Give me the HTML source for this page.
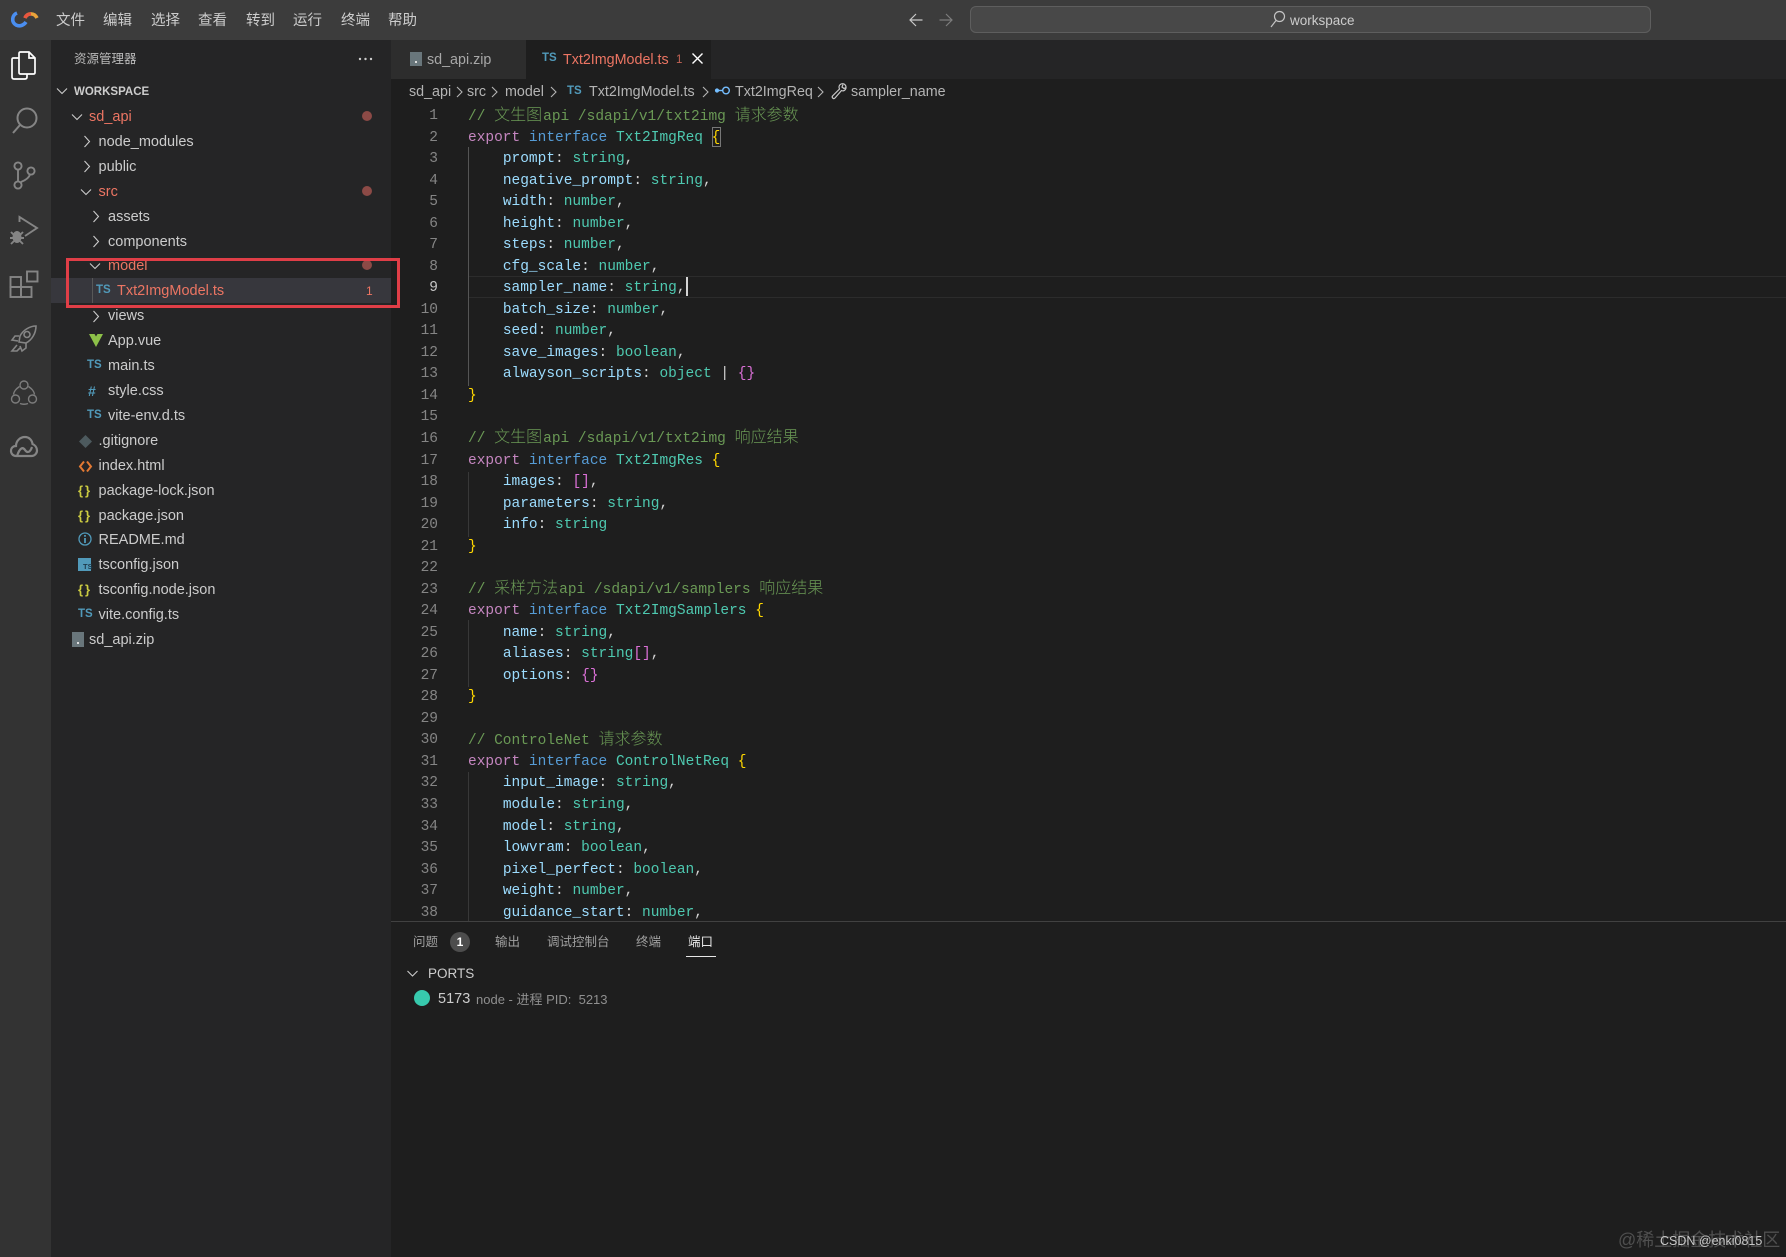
<!DOCTYPE html>
<html lang="zh">
<head>
<meta charset="utf-8">
<title>Txt2ImgModel.ts - workspace</title>
<style>
html,body{margin:0;padding:0;background:#1e1e1e}
#app{position:relative;width:1786px;height:1257px;overflow:hidden;background:#1e1e1e;font-family:"Liberation Sans","Noto Sans CJK SC",sans-serif;color:#ccc}
.a{position:absolute}
#title{left:0;top:0;width:1786px;height:40px;background:#3c3c3c}
.m{position:absolute;top:9px;font-size:14.5px;line-height:24px;color:#ccc;white-space:nowrap}
#act{left:0;top:40px;width:51px;height:1217px;background:#333}
#side{left:51px;top:40px;width:340px;height:1217px;background:#252526}
#tabs{left:391px;top:40px;width:1395px;height:39px;background:#252526}
.r{position:absolute;height:25px;line-height:25px;font-size:14.5px;white-space:nowrap;color:#ccc}
.e{color:#ec7563}
.ic{position:absolute;font-weight:bold;text-align:center;white-space:nowrap}
.ts{color:#519aba;font-size:11.5px;line-height:25px;height:25px}
.js{color:#cbcb41;font-size:13px;line-height:25px;height:25px;letter-spacing:2px}
.dot{position:absolute;left:362px;width:10px;height:10px;border-radius:50%;background:#8c4a46}
#code{left:468px;top:106px;width:1300px;height:815px;overflow:hidden;font-family:"Liberation Mono",monospace;font-size:14.5px;color:#d4d4d4}
.l{height:21.54px;line-height:21.54px;white-space:pre}
.c{position:relative;top:-1.5px}
.k{color:#c586c0}.i{color:#569cd6}.t{color:#4ec9b0}.p{color:#9cdcfe}.c{color:#6a9955}.b{color:#ffd700}.o{color:#da70d6}
.z{font-family:"Noto Sans CJK SC",sans-serif;font-size:16px;line-height:1;font-weight:300}
.y{margin-right:1px}
#nums{left:400px;top:106px;width:38px;height:815px;overflow:hidden;text-align:right;font-family:"Liberation Mono",monospace;font-size:14.5px;color:#858585}
#panel{left:391px;top:921px;width:1395px;height:336px;background:#1e1e1e;border-top:1px solid #414141;box-sizing:border-box}
.pt{position:absolute;top:932px;font-size:12.5px;line-height:20px;color:#a0a0a0;white-space:nowrap}
svg{position:absolute;overflow:visible}
</style>
</head>
<body>
<div id="app">

<div id="title" class="a"></div>
<svg style="left:10px;top:10px" width="28" height="20" viewBox="0 0 28 20" fill="none">
<path d="M7 3 C2 5 1 12 6 15 C10 17 14 15 16 12" stroke="#4a8ef0" stroke-width="3.6"/>
<path d="M15 8 C17 3 24 2 27 8" stroke="#e9a33a" stroke-width="3.6"/>
<path d="M15 8 C16 5 19 4 21 4" stroke="#e8553f" stroke-width="3.6"/>
</svg>
<div class="m" style="left:56px">文件</div>
<div class="m" style="left:103px">编辑</div>
<div class="m" style="left:151px">选择</div>
<div class="m" style="left:198px">查看</div>
<div class="m" style="left:246px">转到</div>
<div class="m" style="left:293px">运行</div>
<div class="m" style="left:341px">终端</div>
<div class="m" style="left:388px">帮助</div>
<svg style="left:908px;top:12px" width="16" height="16" viewBox="0 0 16 16" fill="none" stroke="#c8c8c8" stroke-width="1.2"><path d="M14.5 8H2M8 2 2 8l6 6"/></svg>
<svg style="left:938px;top:12px" width="16" height="16" viewBox="0 0 16 16" fill="none" stroke="#7d7d7d" stroke-width="1.2"><path d="M1.5 8H14M8 2l6 6-6 6"/></svg>
<div class="a" style="left:970px;top:6px;width:681px;height:27px;box-sizing:border-box;background:#484848;border:1px solid #5e5e5e;border-radius:6px"></div>
<svg style="left:1270px;top:10px" width="16" height="18" viewBox="0 0 16 18" fill="none" stroke="#c4c4c4" stroke-width="1.2"><circle cx="9.5" cy="6.5" r="5"/><path d="M6 10.5 1 17"/></svg>
<div class="a" style="left:1290px;top:8.500px;font-size:13.5px;line-height:24px;color:#ccc">workspace</div>

<div id="act" class="a"></div>
<svg style="left:10px;top:50px" width="28" height="32" viewBox="0 0 28 32" fill="none" stroke="#fff" stroke-width="1.7">
<path d="M9 8H3.5Q2 8 2 9.5V27Q2 29 4 29H15Q17 29 17 27V24"/>
<path d="M9 3.5Q9 2 10.5 2H19L25 8V22.5Q25 24 23.5 24H10.5Q9 24 9 22.5Z"/>
<path d="M19 2V8H25"/>
</svg>
<svg style="left:11px;top:106px" width="28" height="30" viewBox="0 0 28 30" fill="none" stroke="#858585" stroke-width="2"><circle cx="16" cy="12" r="9.5"/><path d="M9 19 2 27"/></svg>
<svg style="left:12px;top:161px" width="26" height="30" viewBox="0 0 26 30" fill="none" stroke="#858585" stroke-width="1.9"><circle cx="6" cy="5" r="3.6"/><circle cx="6" cy="24" r="3.6"/><circle cx="19" cy="10" r="3.6"/><path d="M6 9V20M9 21C14 19 17 17 18 13.5"/></svg>
<svg style="left:10px;top:216px" width="30" height="30" viewBox="0 0 30 30" fill="none" stroke="#858585" stroke-width="1.9"><path d="M9.500 6V1L27 12 15 20"/><ellipse cx="7" cy="21" rx="4.500" ry="6" fill="#858585" stroke="none"/><path d="M1 16l3 3M13 16l-3 3M0 22h3M11 22h3M1 28l3-3M13 28l-3-3"/></svg>
<svg style="left:10px;top:270px" width="29" height="30" viewBox="0 0 29 30" fill="none" stroke="#858585" stroke-width="1.9"><rect x=".5" y="7" width="10.500" height="10"/><rect x=".5" y="17" width="10.500" height="10"/><rect x="11" y="17" width="10.500" height="10"/><rect x="17" y="1.500" width="10.500" height="10"/></svg>
<svg style="left:10px;top:324px" width="28" height="30" viewBox="0 0 28 30" fill="none" stroke="#858585" stroke-width="1.6"><path d="M10 12C13 6 20 2 26 2 26 9 22 16 16 19L9 18Z"/><circle cx="17" cy="10.5" r="3"/><path d="M9 12H5L2 16 8 17M16 19V24L12 27 10 22M7 21 2 27h5l3-3"/></svg>
<svg style="left:10px;top:379px" width="28" height="28" viewBox="0 0 28 28" fill="none" stroke="#7d7d7d" stroke-width="1.400"><circle cx="14" cy="6" r="4"/><circle cx="5.500" cy="20" r="4"/><circle cx="22.500" cy="20" r="4"/><path d="M9.500 7.500C6 10 4 12 3.500 15.500M18.500 7.500C22 10 24 12 24.500 15.500M10 24.500Q14 26 18 24.500"/></svg>
<svg style="left:10px;top:435px" width="28" height="24" viewBox="0 0 28 24" fill="none" stroke="#858585" stroke-width="2.2"><path d="M7 21H6C3 21 1 18.500 1 16 1 13 3 11 6 11 6 6 10 2 15 2 19 2 22 5 22.500 9 25 10 27 12.500 27 15.500 27 18.500 24.500 21 21.500 21Z"/><path d="M7 21C10 12 13 12 15 15S20 18 22 12"/></svg>

<div id="side" class="a"></div>
<div class="a" style="left:74px;top:49px;font-size:12.5px;line-height:20px;color:#bbb">资源管理器</div>
<svg style="left:358px;top:57px" width="15" height="4" viewBox="0 0 15 4" fill="#ccc"><circle cx="2" cy="2" r="1.200"/><circle cx="7.500" cy="2" r="1.200"/><circle cx="13" cy="2" r="1.200"/></svg>
<svg style="left:56px;top:87px" width="12" height="8" viewBox="0 0 12 8" fill="none" stroke="#ccc" stroke-width="1.100"><path d="M1 1.500 6 6.500 11 1.500"/></svg>
<div class="a" style="left:74px;top:79.500px;font-size:11.5px;line-height:25px;font-weight:bold;color:#ccc">WORKSPACE</div>

<div class="a" style="left:51px;top:278px;width:340px;height:25px;background:#37373d"></div>
<div class="a" style="left:92px;top:278px;width:1px;height:25px;background:#585858"></div>

<svg style="left:71px;top:113px" width="12" height="8" viewBox="0 0 12 8" fill="none" stroke="#ccc" stroke-width="1.100"><path d="M1 1.500 6 6.500 11 1.500"/></svg>
<div class="r e" style="left:89px;top:104.500px">sd_api</div>
<div class="dot" style="top:111px"></div>
<svg style="left:83px;top:135px" width="8" height="13" viewBox="0 0 8 13" fill="none" stroke="#ccc" stroke-width="1.100"><path d="M1.500 1 6.500 6.500 1.500 12"/></svg>
<div class="r" style="left:98.500px;top:129.500px">node_modules</div>
<svg style="left:83px;top:160px" width="8" height="13" viewBox="0 0 8 13" fill="none" stroke="#ccc" stroke-width="1.100"><path d="M1.500 1 6.500 6.500 1.500 12"/></svg>
<div class="r" style="left:98.500px;top:154.500px">public</div>
<svg style="left:80px;top:188px" width="12" height="8" viewBox="0 0 12 8" fill="none" stroke="#ccc" stroke-width="1.100"><path d="M1 1.500 6 6.500 11 1.500"/></svg>
<div class="r e" style="left:98.500px;top:179.500px">src</div>
<div class="dot" style="top:186px"></div>
<svg style="left:92px;top:210px" width="8" height="13" viewBox="0 0 8 13" fill="none" stroke="#ccc" stroke-width="1.100"><path d="M1.500 1 6.500 6.500 1.500 12"/></svg>
<div class="r" style="left:108px;top:204.500px">assets</div>
<svg style="left:92px;top:235px" width="8" height="13" viewBox="0 0 8 13" fill="none" stroke="#ccc" stroke-width="1.100"><path d="M1.500 1 6.500 6.500 1.500 12"/></svg>
<div class="r" style="left:108px;top:229.500px">components</div>
<div class="a" style="left:0;top:.5px;width:0;height:0">
<svg style="left:89px;top:261px" width="12" height="8" viewBox="0 0 12 8" fill="none" stroke="#ccc" stroke-width="1.100"><path d="M1 1.500 6 6.500 11 1.500"/></svg>
<div class="r e" style="left:108px;top:253px">model</div>
<div class="dot" style="top:259px"></div>
<div class="ic ts" style="left:96px;top:277px">TS</div>
<div class="r e" style="left:117px;top:278px">Txt2ImgModel.ts</div>
<div class="r e" style="left:366px;top:278px;font-size:12px">1</div>
<svg style="left:92px;top:309px" width="8" height="13" viewBox="0 0 8 13" fill="none" stroke="#ccc" stroke-width="1.100"><path d="M1.500 1 6.500 6.500 1.500 12"/></svg>
<div class="r" style="left:108px;top:303.500px">views</div>
<svg style="left:89px;top:333px" width="14" height="13" viewBox="0 0 14 13"><path d="M0 0H5.500L7 2.500 8.500 0H14L7 13Z" fill="#8dc149"/></svg>
<div class="r" style="left:108px;top:328.500px">App.vue</div>
<div class="ic ts" style="left:87px;top:352.500px">TS</div>
<div class="r" style="left:108px;top:353.500px">main.ts</div>
<div class="ic" style="left:88px;top:378px;font-size:14px;line-height:25px;color:#519aba">#</div>
<div class="r" style="left:108px;top:378.500px">style.css</div>
<div class="ic ts" style="left:87px;top:402.500px">TS</div>
<div class="r" style="left:108px;top:403.500px">vite-env.d.ts</div>
<svg style="left:78px;top:433px" width="15" height="15" viewBox="0 0 15 15"><path d="M7.500 1 14 7.500 7.500 14 1 7.500Z" fill="#4d5a5e"/></svg>
<div class="r" style="left:98.500px;top:428.500px">.gitignore</div>
<svg style="left:79px;top:459px" width="13" height="13" viewBox="0 0 13 13" fill="none" stroke="#e37933" stroke-width="2"><path d="M5 1.500 1 6.500 5 11.500M8 1.500 12 6.500 8 11.500"/></svg>
<div class="r" style="left:98.500px;top:453.500px">index.html</div>
<div class="ic js" style="left:78px;top:477.500px">{}</div>
<div class="r" style="left:98.500px;top:478.500px">package-lock.json</div>
<div class="ic js" style="left:78px;top:502px">{}</div>
<div class="r" style="left:98.500px;top:503px">package.json</div>
<svg style="left:78px;top:531px" width="14" height="14" viewBox="0 0 14 14" fill="none" stroke="#519aba" stroke-width="1.300"><circle cx="7" cy="7" r="6"/><path d="M7 6V11M7 3V4.800" stroke-width="1.800"/></svg>
<div class="r" style="left:98.500px;top:527px">README.md</div>
<div class="a" style="left:78px;top:557px;width:13px;height:13px;background:#519aba"></div>
<div class="a" style="left:83px;top:561px;font-size:7.500px;line-height:9px;font-weight:bold;color:#1e3a4a">TS</div>
<div class="r" style="left:98.500px;top:552.500px">tsconfig.json</div>
<div class="ic js" style="left:78px;top:576.500px">{}</div>
<div class="r" style="left:98.500px;top:577.500px">tsconfig.node.json</div>
<div class="ic ts" style="left:78px;top:601.500px">TS</div>
<div class="r" style="left:98.500px;top:602.500px">vite.config.ts</div>
<svg style="left:72px;top:631px" width="12" height="15" viewBox="0 0 12 15"><path d="M0 0H12V15H0Z" fill="#69767b"/><rect x="5" y="10" width="2" height="2" fill="#ddd"/></svg>
<div class="r" style="left:89px;top:627.500px">sd_api.zip</div>
</div>

<div class="a" style="left:66px;top:257.500px;width:334px;height:50px;box-sizing:border-box;border:3px solid #e03e47"></div>

<div id="tabs" class="a"></div>
<div class="a" style="left:391px;top:40px;width:135px;height:39px;background:#2d2d2d"></div>
<div class="a" style="left:526px;top:40px;width:185px;height:39px;background:#1e1e1e"></div>
<svg style="left:410px;top:52px" width="12" height="14" viewBox="0 0 12 14"><path d="M0 0H12V14H0Z" fill="#69767b"/><rect x="5" y="9" width="2" height="2" fill="#ddd"/></svg>
<div class="a" style="left:427px;top:47.500px;font-size:14.300px;line-height:25px;color:#a8a8a8">sd_api.zip</div>
<div class="ic ts" style="left:542px;top:46px">TS</div>
<div class="a e" style="left:563px;top:47.500px;font-size:14.300px;line-height:25px">Txt2ImgModel.ts</div>
<div class="a e" style="left:676px;top:48px;font-size:11.500px;line-height:25px;opacity:.8">1</div>
<svg style="left:692px;top:53px" width="11" height="11" viewBox="0 0 11 11" stroke="#fff" stroke-width="1.400"><path d="M.5.500 10.500 10.500M10.500.500.500 10.500"/></svg>

<div class="a" style="left:391px;top:79px;width:1395px;height:25px;background:#1e1e1e"></div>
<div class="a" style="left:409px;top:79.500px;font-size:14.300px;line-height:25px;color:#b4b4b4">sd_api</div>
<svg style="left:456px;top:86px" width="7" height="12" viewBox="0 0 7 12" fill="none" stroke="#b4b4b4" stroke-width="1.100"><path d="M1 1 6 6 1 11"/></svg>
<div class="a" style="left:467px;top:79.500px;font-size:14.300px;line-height:25px;color:#b4b4b4">src</div>
<svg style="left:491px;top:86px" width="7" height="12" viewBox="0 0 7 12" fill="none" stroke="#b4b4b4" stroke-width="1.100"><path d="M1 1 6 6 1 11"/></svg>
<div class="a" style="left:505px;top:79.500px;font-size:14.300px;line-height:25px;color:#b4b4b4">model</div>
<svg style="left:550px;top:86px" width="7" height="12" viewBox="0 0 7 12" fill="none" stroke="#b4b4b4" stroke-width="1.100"><path d="M1 1 6 6 1 11"/></svg>
<div class="ic ts" style="left:567px;top:78.500px">TS</div>
<div class="a" style="left:589px;top:79.500px;font-size:14.300px;line-height:25px;color:#b4b4b4">Txt2ImgModel.ts</div>
<svg style="left:702px;top:86px" width="7" height="12" viewBox="0 0 7 12" fill="none" stroke="#b4b4b4" stroke-width="1.100"><path d="M1 1 6 6 1 11"/></svg>
<svg style="left:715px;top:86px" width="16" height="9" viewBox="0 0 16 9" fill="none" stroke="#75beff" stroke-width="1.400"><circle cx="11" cy="4.500" r="3.300"/><path d="M2 4.500H8"/><circle cx="2" cy="4.500" r="1.400" fill="#75beff"/></svg>
<div class="a" style="left:735px;top:79.500px;font-size:14.300px;line-height:25px;color:#b4b4b4">Txt2ImgReq</div>
<svg style="left:817px;top:86px" width="7" height="12" viewBox="0 0 7 12" fill="none" stroke="#b4b4b4" stroke-width="1.100"><path d="M1 1 6 6 1 11"/></svg>
<svg style="left:831px;top:83px" width="16" height="17" viewBox="0 0 16 17" fill="none" stroke="#c8c8c8" stroke-width="1.200"><path d="M10 1C12.500 0 15 1.500 15 4.500 15 7 12.500 8.500 10.500 7.500L4 15C2.500 16.500.5 14.500 1.500 13L8.500 6C7.500 4 8 2 10 1ZM12 1.500 11 4 13 5.500 15 4.500"/></svg>
<div class="a" style="left:851px;top:79.500px;font-size:14.300px;line-height:25px;color:#b4b4b4">sampler_name</div>

<div class="a" style="left:468px;top:276px;width:1318px;height:20px;border-top:1px solid #2c2c2c;border-bottom:1px solid #2c2c2c"></div>
<div class="a" style="left:468px;top:147px;width:1px;height:239px;background:#555"></div>
<div class="a" style="left:468px;top:472px;width:1px;height:65px;background:#383838"></div>
<div class="a" style="left:468px;top:620px;width:1px;height:67px;background:#383838"></div>
<div class="a" style="left:468px;top:772px;width:1px;height:149px;background:#383838"></div>
<div class="a" style="left:711.500px;top:127px;width:9px;height:20px;box-sizing:border-box;border:1px solid #777"></div>
<div class="a" style="left:686px;top:277px;width:2px;height:19px;background:#d4d4d4"></div>

<div id="nums" class="a">
<div class="l">1</div><div class="l">2</div><div class="l">3</div><div class="l">4</div><div class="l">5</div><div class="l">6</div><div class="l">7</div><div class="l">8</div><div class="l" style="color:#c6c6c6">9</div><div class="l">10</div><div class="l">11</div><div class="l">12</div><div class="l">13</div><div class="l">14</div><div class="l">15</div><div class="l">16</div><div class="l">17</div><div class="l">18</div><div class="l">19</div><div class="l">20</div><div class="l">21</div><div class="l">22</div><div class="l">23</div><div class="l">24</div><div class="l">25</div><div class="l">26</div><div class="l">27</div><div class="l">28</div><div class="l">29</div><div class="l">30</div><div class="l">31</div><div class="l">32</div><div class="l">33</div><div class="l">34</div><div class="l">35</div><div class="l">36</div><div class="l">37</div><div class="l">38</div>
</div>

<div id="code" class="a">
<div class="l c">// <span class="z y">文生图</span>api /sdapi/v1/txt2img <span class="z">请求参数</span></div>
<div class="l"><span class="k">export</span> <span class="i">interface</span> <span class="t">Txt2ImgReq</span> <span class="b">{</span></div>
<div class="l">    <span class="p">prompt</span>: <span class="t">string</span>,</div>
<div class="l">    <span class="p">negative_prompt</span>: <span class="t">string</span>,</div>
<div class="l">    <span class="p">width</span>: <span class="t">number</span>,</div>
<div class="l">    <span class="p">height</span>: <span class="t">number</span>,</div>
<div class="l">    <span class="p">steps</span>: <span class="t">number</span>,</div>
<div class="l">    <span class="p">cfg_scale</span>: <span class="t">number</span>,</div>
<div class="l">    <span class="p">sampler_name</span>: <span class="t">string</span>,</div>
<div class="l">    <span class="p">batch_size</span>: <span class="t">number</span>,</div>
<div class="l">    <span class="p">seed</span>: <span class="t">number</span>,</div>
<div class="l">    <span class="p">save_images</span>: <span class="t">boolean</span>,</div>
<div class="l">    <span class="p">alwayson_scripts</span>: <span class="t">object</span> | <span class="o">{}</span></div>
<div class="l"><span class="b">}</span></div>
<div class="l"> </div>
<div class="l c">// <span class="z y">文生图</span>api /sdapi/v1/txt2img <span class="z">响应结果</span></div>
<div class="l"><span class="k">export</span> <span class="i">interface</span> <span class="t">Txt2ImgRes</span> <span class="b">{</span></div>
<div class="l">    <span class="p">images</span>: <span class="o">[]</span>,</div>
<div class="l">    <span class="p">parameters</span>: <span class="t">string</span>,</div>
<div class="l">    <span class="p">info</span>: <span class="t">string</span></div>
<div class="l"><span class="b">}</span></div>
<div class="l"> </div>
<div class="l c">// <span class="z y">采样方法</span>api /sdapi/v1/samplers <span class="z">响应结果</span></div>
<div class="l"><span class="k">export</span> <span class="i">interface</span> <span class="t">Txt2ImgSamplers</span> <span class="b">{</span></div>
<div class="l">    <span class="p">name</span>: <span class="t">string</span>,</div>
<div class="l">    <span class="p">aliases</span>: <span class="t">string</span><span class="o">[]</span>,</div>
<div class="l">    <span class="p">options</span>: <span class="o">{}</span></div>
<div class="l"><span class="b">}</span></div>
<div class="l"> </div>
<div class="l c">// ControleNet <span class="z">请求参数</span></div>
<div class="l"><span class="k">export</span> <span class="i">interface</span> <span class="t">ControlNetReq</span> <span class="b">{</span></div>
<div class="l">    <span class="p">input_image</span>: <span class="t">string</span>,</div>
<div class="l">    <span class="p">module</span>: <span class="t">string</span>,</div>
<div class="l">    <span class="p">model</span>: <span class="t">string</span>,</div>
<div class="l">    <span class="p">lowvram</span>: <span class="t">boolean</span>,</div>
<div class="l">    <span class="p">pixel_perfect</span>: <span class="t">boolean</span>,</div>
<div class="l">    <span class="p">weight</span>: <span class="t">number</span>,</div>
<div class="l">    <span class="p">guidance_start</span>: <span class="t">number</span>,</div>
</div>

<div id="panel" class="a"></div>
<div class="pt" style="left:413px">问题</div>
<div class="a" style="left:450px;top:932px;width:20px;height:20px;border-radius:50%;background:#4d4d4d;color:#fff;font-size:12px;font-weight:bold;line-height:20px;text-align:center">1</div>
<div class="pt" style="left:495px">输出</div>
<div class="pt" style="left:547px">调试控制台</div>
<div class="pt" style="left:636px">终端</div>
<div class="pt" style="left:688px;color:#e7e7e7">端口</div>
<div class="a" style="left:686px;top:956px;width:30px;height:1px;background:#e7e7e7"></div>
<svg style="left:407px;top:970px" width="11" height="7" viewBox="0 0 11 7" fill="none" stroke="#ccc" stroke-width="1.100"><path d="M.5 1 5.500 6 10.500 1"/></svg>
<div class="a" style="left:428px;top:961px;font-size:13.500px;line-height:25px;color:#ccc">PORTS</div>
<div class="a" style="left:414px;top:990px;width:16px;height:16px;border-radius:50%;background:#37c9ad"></div>
<div class="a" style="left:438px;top:986.500px;font-size:14.500px;line-height:25px;color:#ccc">5173</div>
<div class="a" style="left:476px;top:987px;font-size:13px;line-height:25px;color:#8f8f8f;white-space:nowrap">node - 进程 PID: &nbsp;5213</div>

<div class="a" style="left:1618px;top:1228px;font-size:18px;line-height:24px;color:#4f4f4f;white-space:nowrap">@稀土掘金技术社区</div>
<div class="a" style="left:1660px;top:1232px;font-size:12.500px;line-height:18px;color:#c8c8c8;white-space:nowrap">CSDN @enki0815</div>

</div>
</body>
</html>
